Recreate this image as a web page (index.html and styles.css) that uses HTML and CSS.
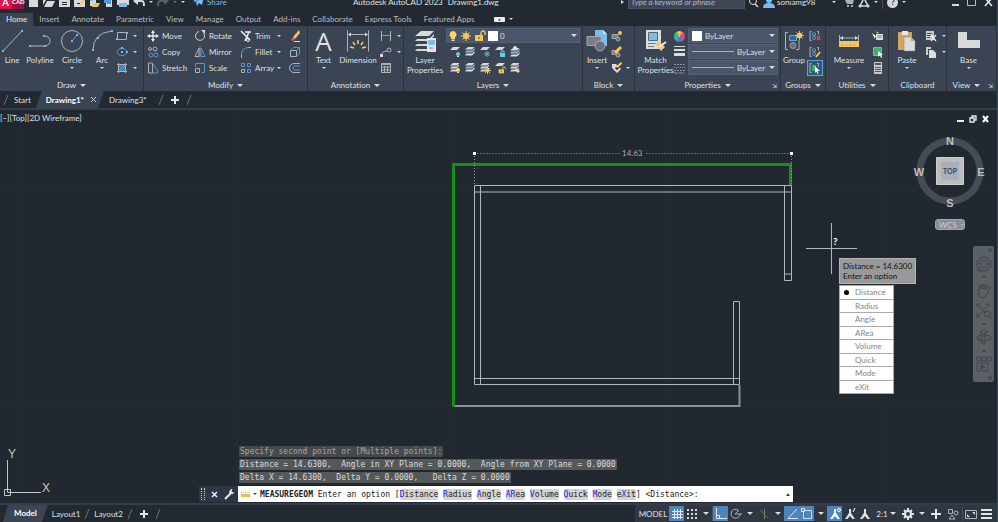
FILE: index.html
```html
<!DOCTYPE html>
<html lang="en">
<head>
  <meta charset="UTF-8">
  <title>Autodesk AutoCAD 2023 - Drawing1.dwg</title>
  <link rel="stylesheet" href="styles.css">
</head>
<body>
  <!-- shared icons -->
  <svg class="defs" aria-hidden="true">
    <symbol id="layer" viewBox="0 0 12 12">
      <path fill="#d9d9d9" d="M4 1h7L8 4H1z"/>
    </symbol>
    <symbol id="layers" viewBox="0 0 12 12">
      <path fill="#d9d9d9" d="M4 1h6.500L8 3.500H1zM2.500 4.500H8L10 2.500v1.500L7.500 6.500H1zM2.500 7.500H8L10 5.500V7L7.500 9.500H1z"/>
    </symbol>
    <symbol id="layers-blue" viewBox="0 0 12 12">
      <path fill="#d9d9d9" d="M4 1h6.500L8 3.500H1z"/>
      <path fill="#77bdf0" d="M2.500 4.500H8L10.500 2v2L8 6.500H1z"/>
      <path fill="#d9d9d9" d="M2.500 7.500H8L10.500 5v2L8 9.500H1z"/>
    </symbol>
    <symbol id="bulb" viewBox="0 0 10 12">
      <path fill="#ffd36b" d="M5 1a3.600 3.600 0 0 1 2 6.500V9H3V7.500A3.600 3.600 0 0 1 5 1z"/>
      <path fill="#ddd" d="M3.500 9.500h3v1.500h-3z"/>
    </symbol>
    <symbol id="sun" viewBox="0 0 12 12">
      <path stroke="#f7c65a" stroke-width="1" d="M6 1v10M1 6h10M2.500 2.500l7 7M9.500 2.500l-7 7"/>
      <circle cx="6" cy="6" r="3" fill="#f7c65a"/>
    </symbol>
    <symbol id="lock" viewBox="0 0 12 12">
      <path fill="#f7c65a" d="M1 5h8v6H1z"/>
      <path fill="none" stroke="#f7c65a" stroke-width="1.300" d="M7 5V3a2 2 0 0 1 4 0v2"/>
      <path fill="#444" d="M4.500 7h1v2h-1z"/>
    </symbol>
    <symbol id="pencil" viewBox="0 0 12 12">
      <path fill="#f7c65a" d="M9 0l2 2-6 6-2-2z"/>
      <path fill="#e8503f" d="M3 6l2 2-2.500 1z"/>
    </symbol>
    <symbol id="scale-man" viewBox="0 0 12 12">
      <path fill="currentColor" d="M5 1h2v4l4 6H8.500L6 8l-2.500 3H1l4-6z"/>
    </symbol>
  </svg>

  <header class="titlebar">
    <div class="quick-access">
      <button class="app-logo">A<small>CAD</small></button>
      <button title="New"><svg width="11" height="12" viewBox="0 0 11 12"><path fill="#d9d9d9" d="M1 0h6l3 3v8H1z"/></svg></button>
      <button title="Open"><svg width="12" height="12" viewBox="0 0 12 12"><path fill="#d9d9d9" d="M0 1h4l1 1h5v2H3L0 9zM4 5h8L9 11H1z"/></svg></button>
      <button title="Save"><svg width="11" height="12" viewBox="0 0 11 12"><path fill="#d9d9d9" d="M0 0h11v11H0z"/><path fill="#222931" d="M2 0h7v4H2zM3 6h5v1H3zM3 8h5v1H3z"/></svg></button>
      <button title="Save As"><svg width="11" height="12" viewBox="0 0 11 12"><path fill="#d9d9d9" d="M0 0h11v11H0z"/><path fill="#222931" d="M2 0h7v4H2zM3 7h3v1H3z"/><path fill="#f7c65a" d="M10 3l1 2-5 5-1-1z"/></svg></button>
      <button title="Open from Web"><svg width="11" height="12" viewBox="0 0 11 12"><path fill="#d9d9d9" d="M1 0h6v10H1z"/><path fill="#f7c65a" d="M4 7h7l-2 4H3z"/><path fill="#77bdf0" d="M1 2h3v3H1z"/></svg></button>
      <button title="Save to Mobile"><svg width="9" height="12" viewBox="0 0 9 12"><path fill="#d9d9d9" d="M2 0h6v11H2z"/><path fill="#4a9bd8" d="M3 1h4v7H3zM0 4h3v3H0z"/></svg></button>
      <button title="Plot"><svg width="12" height="12" viewBox="0 0 12 12"><path fill="#d9d9d9" d="M0 3h12v6H0z"/><path fill="#fff" d="M2 0h8v3H2z"/><path fill="#77bdf0" d="M2 7h8v4H2z"/></svg></button>
      <button title="Undo"><svg width="12" height="12" viewBox="0 0 12 12"><path fill="none" stroke="#d9d9d9" stroke-width="2" d="M3 5h6q2 0 2 5"/><path fill="#d9d9d9" d="M5 1v8L0 5z"/></svg></button>
      <i class="caret"></i>
      <button title="Redo"><svg width="12" height="12" viewBox="0 0 12 12"><path fill="none" stroke="#59606b" stroke-width="2" d="M9 5H3Q1 5 1 10"/><path fill="#59606b" d="M7 1v8l5-4z"/></svg></button>
      <i class="caret dim"></i>
      <i class="caret"></i>
      <button class="share"><svg width="11" height="12" viewBox="0 0 11 12"><path fill="#77bdf0" d="M0 5l11-5-2 9-3-2-2 3-1-4 5-4-6 4z"/></svg>Share</button>
    </div>
    <div class="window-title"><span>Autodesk AutoCAD 2023</span><span>Drawing1.dwg</span></div>
    <div class="infocenter">
      <i class="caret right"></i>
      <input type="text" aria-label="Search" placeholder="Type a keyword or phrase">
      <button title="Search"><svg width="10" height="12" viewBox="0 0 10 12"><circle cx="4" cy="5" r="3.500" fill="none" stroke="#d9d9d9"/><path stroke="#d9d9d9" stroke-width="1.500" d="M6 8l3 3"/></svg></button>
      <button class="user"><svg width="12" height="12" viewBox="0 0 12 12"><circle cx="6" cy="4" r="3" fill="#77bdf0"/><path fill="#77bdf0" d="M0 12q0-5 6-5t6 5z"/></svg>soniamg98</button>
      <i class="caret user-caret"></i>
      <button title="App Store"><svg width="10" height="12" viewBox="0 0 10 12"><path fill="#aeb2b8" d="M0 2h2l1 1h7L9 8H3zM3 9h2v2H3zM7 9h2v2H7z"/></svg></button>
      <button title="Autodesk App"><svg width="12" height="12" viewBox="0 0 12 12"><path fill="none" stroke="#d9d9d9" stroke-width="1.500" d="M6 2l4 8H2z"/><circle cx="2" cy="10" r="1.500" fill="#d9d9d9"/><circle cx="10" cy="10" r="1.500" fill="#d9d9d9"/></svg></button>
      <i class="caret"></i>
      <span class="divider"></span>
      <button class="help" title="Help">?</button>
      <i class="caret"></i>
      <div class="window-buttons">
        <button title="Minimize"><svg width="9" height="10" viewBox="0 0 9 10"><path fill="#d9d9d9" d="M2 7h7v2H2z"/></svg></button>
        <button title="Maximize"><svg width="9" height="10" viewBox="0 0 9 10"><path fill="none" stroke="#b9bdc2" d="M.5.500h8v8h-8z"/></svg></button>
        <button title="Close"><svg width="9" height="10" viewBox="0 0 9 10"><path stroke="#eee" stroke-width="1.500" d="M1 1l7 8M8 1L1 9"/></svg></button>
      </div>
    </div>
  </header>

  <nav class="ribbon-tabs">
    <a href="#" class="active">Home</a>
    <a href="#">Insert</a>
    <a href="#">Annotate</a>
    <a href="#">Parametric</a>
    <a href="#">View</a>
    <a href="#">Manage</a>
    <a href="#">Output</a>
    <a href="#">Add-ins</a>
    <a href="#">Collaborate</a>
    <a href="#">Express Tools</a>
    <a href="#">Featured Apps</a>
    <button class="ribbon-toggle" title="Minimize ribbon"><svg width="11" height="5" viewBox="0 0 11 5"><rect width="11" height="5" rx="1" fill="#eee"/><path fill="#444" d="M4 3.500h3L5.500 1.500z"/></svg><i class="caret"></i></button>
  </nav>

  <main class="ribbon">
    <section class="panel draw">
      <div class="tools">
        <button class="big"><svg width="22" height="22" viewBox="0 0 22 22"><path class="ln" d="M2 21L21 1"/><path class="pt" d="M1 20h2v2H1zM20 0h2v2h-2z"/></svg>Line</button>
        <button class="big"><svg width="22" height="22" viewBox="0 0 22 22"><path class="ln" d="M1 16h15a5 5 0 0 0 0-10h-1"/><path class="pt" d="M0 15h2v2H0zM15 15h2v2h-2zM14 5h2v2h-2z"/></svg>Polyline</button>
        <button class="big"><svg width="22" height="22" viewBox="0 0 22 22"><circle class="ln" cx="11" cy="11" r="10.500"/><path stroke="#56a9e8" d="M11 11l5-6"/><path class="pt" d="M10 10h2v2h-2zM15 4h2v2h-2z"/></svg>Circle<i class="caret"></i></button>
        <button class="big"><svg width="22" height="22" viewBox="0 0 22 22"><path class="ln" d="M2 20Q2 3 21 1"/><path class="pt" d="M1 19h2v2H1zM6 7h2v2H6zM20 0h2v2h-2z"/></svg>Arc<i class="caret"></i></button>
        <div class="small-col">
          <button><svg width="12" height="12" viewBox="0 0 12 12"><path class="ln" d="M1.500 2.500h9v7h-9z"/><path class="pt" d="M0 8h2v2H0zM10 2h2v2h-2z"/></svg><i class="caret"></i></button>
          <button><svg width="12" height="12" viewBox="0 0 12 12"><ellipse class="bl" cx="6" cy="6" rx="5" ry="3.500"/><path class="pt" d="M5 5h2v2H5zM10 5h2v2h-2zM5 1h2v2H5z"/></svg><i class="caret"></i></button>
          <button><svg width="12" height="12" viewBox="0 0 12 12"><path fill="#3d6f9d" d="M3 3h6v6H3z"/><path stroke="#56a9e8" stroke-width="1" d="M3 5l2-2M3 8l5-5M4 9l5-5M7 9l2-2"/><path class="ln" d="M1 2.500h10M1 9.500h10M2.500 1v10M9.500 1v10"/></svg><i class="caret"></i></button>
        </div>
      </div>
      <h2>Draw<i class="caret"></i></h2>
    </section>

    <section class="panel modify">
      <div class="tools">
        <div class="small-col">
          <button><svg width="12" height="12" viewBox="0 0 12 12"><path stroke="#eee" stroke-width="1.300" d="M6 2v8M2 6h8"/><path fill="#eee" d="M6 0l2 3H4zM6 12l2-3H4zM0 6l3-2v4zM12 6L9 4v4z"/></svg>Move</button>
          <button><svg width="12" height="12" viewBox="0 0 12 12"><circle class="ln" cx="3" cy="3" r="1.500"/><circle class="ln" cx="8" cy="3" r="2"/><circle class="bl" cx="4" cy="9" r="2"/><circle class="bl" cx="9" cy="9" r="2"/></svg>Copy</button>
          <button><svg width="12" height="12" viewBox="0 0 12 12"><path class="ln" d="M1.500 1v10h4V1z"/><path class="bl" d="M5.500 1.500l5 7v2.500h-5"/></svg>Stretch</button>
        </div>
        <div class="small-col">
          <button><svg width="12" height="12" viewBox="0 0 12 12"><path fill="none" stroke="#d9d9d9" d="M9.500 3A4.500 4.500 0 1 1 5 1.500"/><path fill="#d9d9d9" d="M7 0h4v4z"/></svg>Rotate</button>
          <button><svg width="12" height="12" viewBox="0 0 12 12"><path class="ln" d="M5 2v8.500H1z"/><path class="bl" d="M7 2v8.500h4z"/><path stroke="#aaa" d="M6 0v12" stroke-width=".5"/></svg>Mirror</button>
          <button><svg width="12" height="12" viewBox="0 0 12 12"><path class="bl" d="M1.500 5V1.500h9v9H8"/><path class="ln" d="M1.500 6.500h4v4h-4z"/></svg>Scale</button>
        </div>
        <div class="small-col">
          <button><svg width="12" height="12" viewBox="0 0 12 12"><path stroke="#eee" stroke-width="1.500" fill="none" d="M1 1l9 9M9 2l-4 9M5 2h6"/><circle cx="8" cy="10" r="1.500" fill="none" stroke="#eee"/></svg>Trim<i class="caret"></i></button>
          <button><svg width="12" height="12" viewBox="0 0 12 12"><path class="bl" d="M1.500 11V8Q2 1.500 9 1.500"/><path class="ln" d="M8 1.500h3M1.500 9v3"/></svg>Fillet<i class="caret"></i></button>
          <button><svg width="12" height="12" viewBox="0 0 12 12"><path class="bl" d="M1.500 1.500h3v3h-3zM7.500 1.500h3v3h-3zM7.500 7.500h3v3h-3z"/><path class="ln" d="M1.500 7.500h3v3h-3z"/></svg>Array<i class="caret"></i></button>
        </div>
        <div class="small-col">
          <button title="Erase"><svg width="12" height="12" viewBox="0 0 12 12"><path fill="#f7c65a" d="M10 0l1 3-5 6-2-2z"/><path fill="#e8604f" d="M4 7l2 2-2 2-2-1z"/><path stroke="#ddd" d="M5 11.500h6"/></svg></button>
          <button title="Explode"><svg width="12" height="12" viewBox="0 0 12 12"><path class="ln" d="M1.500 4.500h6v6h-6z"/><path class="bl" d="M2.500 3.500l2-2h6v6l-2 2M8 4l2.500-2.500"/></svg></button>
          <button title="Offset"><svg width="12" height="12" viewBox="0 0 12 12"><path class="ln" d="M11 1.500H5a4.500 4.500 0 0 0 0 9h6"/><path class="bl" d="M11 4H6a2 2 0 0 0 0 4h5"/></svg></button>
        </div>
      </div>
      <h2>Modify<i class="caret"></i></h2>
    </section>

    <section class="panel annotation">
      <div class="tools">
        <button class="big"><span class="letter">A</span>Text<i class="caret"></i></button>
        <button class="big"><svg width="22" height="22" viewBox="0 0 22 22"><path class="ln" d="M.5.500v21M21.500.500v21M2 4.500h18"/><path fill="#d9d9d9" d="M1 4.500l3-2v4zM21 4.500l-3-2v4z"/><path stroke="#f7c65a" stroke-width="1.500" d="M11 10v4M6 12l2 3M16 12l-2 3M3 17l4 1M19 17l-4 1"/></svg>Dimension</button>
        <div class="small-col">
          <button><svg width="12" height="12" viewBox="0 0 12 12"><path class="ln" d="M1.500 1v10M10.500 1v10"/><path stroke="#56a9e8" d="M2 5.500h8"/></svg><i class="caret"></i></button>
          <button><svg width="12" height="12" viewBox="0 0 12 12"><path class="ln" d="M1 10q1-5 6-5"/><circle class="ln" cx="9" cy="4" r="2"/><path fill="#d9d9d9" d="M0 8h3v3H0z"/></svg><i class="caret"></i></button>
          <button><svg width="12" height="12" viewBox="0 0 12 12"><path class="ln" d="M1.500 1.500h9v9h-9zM1.500 5h9M1.500 8h9M4.500 4v7M7.500 4v7"/><path fill="#aaa" d="M1 1h10v2H1z"/></svg></button>
        </div>
      </div>
      <h2>Annotation<i class="caret"></i></h2>
    </section>

    <section class="panel layers">
      <div class="tools">
        <button class="big two-line"><svg width="24" height="22" viewBox="0 0 24 22"><path fill="#d9d9d9" d="M8 1h13l-5 5H2zM4 9h12l5-5v2l-5 5H2zM4 14h10v2H2zM4 19h10v2H2z"/><path fill="#e4e4e4" d="M14 8h9v14h-9z"/><path fill="#77bdf0" d="M15 10h7v5h-7z"/><path stroke="#888" d="M16 18h4"/></svg>Layer<br>Properties</button>
        <div class="layer-tools">
          <div class="combo">
            <svg width="10" height="12"><use href="#bulb"/></svg>
            <svg width="12" height="12"><use href="#sun"/></svg>
            <svg width="12" height="12"><use href="#lock"/></svg>
            <span class="swatch"></span>
            <select aria-label="Layer"><option>0</option></select>
            <i class="caret"></i>
          </div>
          <div class="icon-row">
            <button><svg width="12" height="12"><use href="#layer"/><circle cx="9" cy="8" r="2" fill="#5fd4e0"/><path fill="#ddd" d="M8 10h2v1H8z"/></svg></button>
            <button><svg width="12" height="12"><use href="#layers-blue"/></svg></button>
            <button><svg width="12" height="12"><use href="#layer"/><path stroke="#4fb5bd" d="M8 5v6M5 8h6M6 6l4 4M10 6l-4 4"/></svg></button>
            <button><svg width="12" height="12"><use href="#layer"/><path fill="#5fd4e0" d="M6 7h5v4H6z"/><path class="ln cyan" d="M7 7V5h3v2"/></svg></button>
            <button><svg width="12" height="12"><use href="#layers-blue" y="1"/><circle cx="6" cy="2" r="2" fill="#ddd"/></svg></button>
          </div>
          <div class="icon-row">
            <button><svg width="12" height="12"><use href="#layers"/><circle cx="9" cy="8" r="2" fill="#ffd36b"/><path fill="#ddd" d="M8 10h2v1H8z"/></svg></button>
            <button><svg width="12" height="12"><use href="#layers-blue"/></svg></button>
            <button><svg width="12" height="12"><use href="#layers"/><path stroke="#f7c65a" d="M8.500 5v7M5 8.500h7M6 6l5 5M11 6l-5 5"/></svg></button>
            <button><svg width="12" height="12"><use href="#layer"/><use href="#lock" x="4" y="4" width="8" height="8"/></svg></button>
            <button><svg width="12" height="12"><use href="#layers"/><path fill="#f0d9a8" d="M7 6l4 3-2 2-3-3z"/></svg></button>
          </div>
        </div>
      </div>
      <h2>Layers<i class="caret"></i></h2>
    </section>

    <section class="panel block">
      <div class="tools">
        <button class="big"><svg width="22" height="22" viewBox="0 0 22 22"><path fill="#77bdf0" d="M9 0h8l4 4v12H9z"/><path fill="#c9e5fa" d="M17 0l4 4h-4z"/><path fill="#7b8087" stroke="#a5a8ad" d="M1 6.500h14v9H1z"/><circle cx="14" cy="16" r="5" fill="#6b7078" stroke="#a5a8ad"/></svg>Insert<i class="caret"></i></button>
        <div class="small-col">
          <button><svg width="12" height="12" viewBox="0 0 12 12"><path fill="#7b8087" stroke="#a5a8ad" d="M1 4.500h6v4H1z"/><circle cx="7" cy="9" r="2" fill="#6b7078" stroke="#a5a8ad"/><circle cx="9" cy="3" r="2" fill="#f7c65a"/></svg></button>
          <button><svg width="12" height="12" viewBox="0 0 12 12"><path fill="#7b8087" stroke="#a5a8ad" d="M1 4.500h6v4H1z"/><circle cx="7" cy="9" r="2" fill="#6b7078" stroke="#a5a8ad"/><use href="#pencil"/></svg></button>
          <button><svg width="12" height="12" viewBox="0 0 12 12"><path fill="#ddd" d="M1 2h4l5 5-4 4-5-5z"/><path stroke="#555" d="M4 6l2 2 5-6"/><use href="#pencil" x="3" width="9" height="9"/></svg><i class="caret"></i></button>
        </div>
      </div>
      <h2>Block<i class="caret"></i></h2>
    </section>

    <section class="panel properties">
      <div class="tools">
        <button class="big two-line"><svg width="22" height="22" viewBox="0 0 22 22"><path fill="#dcdcdc" d="M1 0h15v19H1z"/><path fill="#77bdf0" stroke="#5b6572" d="M3.500 2.500h9v8h-9z"/><path stroke="#777" d="M3 13.500h9M3 16.500h6"/><path fill="#f3cd75" d="M10 14l4-3 6 6-4 4z"/><path stroke="#eee" stroke-width="2" d="M14 17l7-5"/></svg>Match<br>Properties</button>
        <div class="small-col prop-icons">
          <button title="Color"><span class="wheel"></span></button>
          <button title="Lineweight"><svg width="12" height="12" viewBox="0 0 12 12"><path fill="#ddd" d="M0 0h11v1H0zM0 3h11v2H0zM0 7h11v3H0z"/></svg></button>
          <button title="Linetype"><svg width="12" height="12" viewBox="0 0 12 12"><path stroke="#8d949e" stroke-dasharray="2 1" d="M0 2.500h11M0 8.500h11"/><path stroke="#8d949e" stroke-dasharray="1 1" d="M0 5.500h11"/><path stroke="#8d949e" stroke-dasharray="4 1" d="M0 11h11"/></svg></button>
        </div>
        <div class="combos">
          <div class="combo"><span class="swatch"></span><select aria-label="Color"><option>ByLayer</option></select><i class="caret"></i></div>
          <div class="combo"><span class="line"></span><select aria-label="Lineweight"><option>ByLayer</option></select><i class="caret"></i></div>
          <div class="combo"><span class="line"></span><select aria-label="Linetype"><option>ByLayer</option></select><i class="caret"></i></div>
        </div>
      </div>
      <h2>Properties<i class="caret"></i><span class="launcher">⇲</span></h2>
    </section>

    <section class="panel groups">
      <div class="tools">
        <button class="big"><svg width="22" height="22" viewBox="0 0 22 22"><path class="ln" d="M5 2.500H2.500v17H5M13 19.500h3V10"/><path fill="#356a98" stroke="#56a9e8" d="M6.500 5.500h7v5h-7z"/><circle cx="10" cy="15.500" r="3" fill="#6b7078" stroke="#999"/><use href="#sun" x="11" y="0" width="11" height="11"/></svg>Group</button>
        <div class="small-col">
          <button><svg width="12" height="12" viewBox="0 0 12 12"><path class="ln" d="M2.500 1.500H1v9h1.500M8 1.500h1.500v3"/><path class="bl" d="M3.500 3h3v2.500h-3z"/><circle class="bl" cx="5" cy="8" r="1.500"/><path stroke="#e8503f" stroke-width="1.300" d="M8 6l3 4M11 6l-3 4"/></svg></button>
          <button><svg width="12" height="12" viewBox="0 0 12 12"><path class="ln" d="M2.500 1.500H1v9h1.500M8 1.500h1.500v3"/><path class="bl" d="M3.500 3h3v2.500h-3z"/><circle class="bl" cx="5" cy="8" r="1.500"/><path stroke="#f7c65a" stroke-width="2" d="M11 6l-4 5"/></svg></button>
          <button class="on"><svg width="12" height="12" viewBox="0 0 12 12"><path class="ln" d="M2.500 1.500H1v9h1.500M8 1.500h1.500v3"/><path fill="#3fae6a" d="M3 3h4v6H3z"/><path fill="#fff" d="M6 4l5 5H8.500l1 2.500-1 .5-1-2.500L6 11z"/></svg></button>
        </div>
      </div>
      <h2>Groups<i class="caret"></i></h2>
    </section>

    <section class="panel utilities">
      <div class="tools">
        <button class="big"><svg width="20" height="22" viewBox="0 0 20 22"><path class="ln" d="M.5 5v6M19.500 5v6M1 8h18"/><path fill="#d9d9d9" d="M1 8l3-2v4zM19 8l-3-2v4z"/><path fill="#f7c65a" d="M0 11h20v6H0z"/><path stroke="#c99c42" d="M3.500 14v2M7.500 14v2M11.500 14v2M15.500 14v2"/></svg>Measure<i class="caret"></i></button>
        <div class="small-col">
          <button><svg width="12" height="12" viewBox="0 0 12 12"><path fill="#ddd" d="M4 4h7v6H4z"/><path fill="#77bdf0" d="M5 5h5v3H5z"/><path fill="#f7c65a" d="M4 0l1 2h2L5 4z"/><path fill="#fff" d="M0 3l5 4H3v2z"/></svg></button>
          <button><svg width="12" height="12" viewBox="0 0 12 12"><path fill="#3fae6a" stroke="#67c98c" d="M1.500 1.500h8v8h-8z"/><path fill="#fff" d="M6 5l5 4H9l1 2.500-1 .5-1-2.500-2 1z"/></svg></button>
          <button><svg width="12" height="12" viewBox="0 0 12 12"><path fill="#c9c9c9" d="M2 0h8v12H2z"/><path fill="#4d5562" d="M3 1h6v2H3zM3 5h6v1H3zM3 7h6v1H3zM3 9h6v1H3z"/></svg></button>
        </div>
      </div>
      <h2>Utilities<i class="caret"></i></h2>
    </section>

    <section class="panel clipboard">
      <div class="tools">
        <button class="big"><svg width="20" height="22" viewBox="0 0 20 22"><path fill="#d6a561" d="M1 2h14v18H1z"/><path fill="#e9e9e9" d="M5 1h6v4H5z"/><path fill="#dcdcdc" stroke="#7d8086" stroke-width=".5" d="M7 7h7l4 4v10H7z"/><path fill="#aaa" d="M14 7l4 4h-4z"/></svg>Paste<i class="caret"></i></button>
        <div class="small-col">
          <button><svg width="12" height="12" viewBox="0 0 12 12"><path fill="#c9c9c9" d="M1 1h8v9H1z"/><path stroke="#555" d="M2 3.500h5M2 5.500h4M2 7.500h3"/><path stroke="#eee" stroke-width="1.200" d="M6 5l5 6M11 5l-5 6"/></svg><i class="caret"></i></button>
          <button><svg width="12" height="12" viewBox="0 0 12 12"><path fill="#c9c9c9" d="M1 1h5v2H3v6H1z"/><path fill="#dcdcdc" d="M4 4h4l3 3v5H4z"/></svg><i class="caret"></i></button>
        </div>
      </div>
      <h2>Clipboard</h2>
    </section>

    <section class="panel view">
      <div class="tools">
        <button class="big"><svg width="22" height="22" viewBox="0 0 22 22"><path fill="#d9d9d9" d="M0 2h9v8h13v8H0z"/></svg>Base<i class="caret"></i></button>
      </div>
      <h2>View<i class="caret"></i><span class="launcher">⇲</span></h2>
    </section>
  </main>

  <nav class="file-tabs">
    <svg class="slash" viewBox="0 0 6 10"><path d="M5 0L1 10"/></svg>
    <a href="#">Start</a>
    <a href="#" class="active">Drawing1*<svg width="7" height="7" viewBox="0 0 7 7"><path stroke="#c9ccd1" d="M1 1l5 5M6 1L1 6"/></svg></a>
    <a href="#">Drawing3*</a>
    <svg class="slash gap" viewBox="0 0 6 10"><path d="M5 0L1 10"/></svg>
    <button class="add" title="New drawing"><svg width="8" height="8" viewBox="0 0 8 8"><path fill="#e6e6e6" d="M3 0h2v3h3v2H5v3H3V5H0V3h3z"/></svg></button>
    <svg class="slash" viewBox="0 0 6 10"><path d="M5 0L1 10"/></svg>
  </nav>

  <div class="canvas">
    <div class="viewport-label">[−][Top][2D Wireframe]</div>

    <div class="viewport-buttons">
      <button title="Minimize"><svg width="8" height="8" viewBox="0 0 8 8"><path fill="#eee" d="M1 5h7v2H1z"/></svg></button>
      <button title="Restore"><svg width="8" height="8" viewBox="0 0 8 8"><path fill="none" stroke="#eee" stroke-width="1.300" d="M1 3h4v4H1zM3 3V1h4v4H5"/></svg></button>
      <button title="Close"><svg width="8" height="8" viewBox="0 0 8 8"><path stroke="#fff" stroke-width="2" d="M1 1l5 6M6 1L1 7"/></svg></button>
    </div>

    <!-- floor plan -->
    <svg class="plan" width="360" height="265" viewBox="440 145 360 265">
      <g fill="none" stroke="#b4b7ba">
        <path d="M474.500 185.500h317v95h-7v-95M474.500 192h317M474.500 185.500v199h265v-83h-6v83M480.500 185.500v199M474.500 378.500h265M784.500 274h7"/>
        <path stroke="#8e9194" stroke-width="2" d="M453 406h286.500v-21"/>
        <path stroke="#158f19" stroke-width="3" d="M453.500 407V164.500h337V185"/>
        <path stroke="#9a9da1" stroke-dasharray="1 2" d="M474.500 153.500h146M646.500 153.500h145M474.500 156v29M791.500 156v29"/>
      </g>
      <path fill="#fff" d="M473 152h3v3h-3zM790 152h3v3h-3z"/>
      <text x="622" y="156">14.63</text>
    </svg>

    <svg class="crosshair" width="52" height="52" viewBox="0 0 52 52">
      <path stroke="#b5b8bb" d="M25.500 0v51M0 25.500h51"/>
      <text x="27" y="22">?</text>
    </svg>

    <div class="dynamic-prompt">Distance = 14.6300<br>Enter an option</div>
    <div class="dynamic-menu">
      <button class="selected">Distance</button>
      <button>Radius</button>
      <button>Angle</button>
      <button>ARea</button>
      <button>Volume</button>
      <button>Quick</button>
      <button>Mode</button>
      <button>eXit</button>
    </div>

    <div class="viewcube">
      <svg width="76" height="80" viewBox="0 0 76 80">
        <circle cx="38" cy="40" r="30" fill="none" stroke="#464c55" stroke-width="7"/>
        <path fill="#bdbdbe" stroke="#d0d0d0" d="M24.500 26.500h27v27h-27z"/>
        <path fill="#a9afbb" d="M29 31h18v18H29z"/>
        <g class="compass">
          <text x="38" y="14">N</text>
          <text x="69" y="45">E</text>
          <text x="38" y="76">S</text>
          <text x="7" y="45">W</text>
        </g>
        <text class="face" x="38" y="43">TOP</text>
      </svg>
      <button class="wcs">WCS<i class="caret"></i></button>
    </div>

    <div class="navbar">
      <span class="dot"></span>
      <button title="Steering Wheel"><svg width="16" height="16" viewBox="0 0 16 16"><circle cx="8" cy="8" r="7"/><circle cx="8" cy="8" r="4"/><path d="M2 12v3h5"/></svg></button>
      <i class="caret"></i>
      <button title="Pan"><svg width="16" height="16" viewBox="0 0 16 16"><path d="M4 10L1 7q1-2 3 0L3 3q1-2 2 0l1 3V2q1-2 2 0v4l1-4q1-1 2 0l-1 5 2-3q2-1 2 1l-3 6q-1 4-5 4-3-1-4-4z"/></svg></button>
      <button title="Zoom Extents"><svg width="16" height="16" viewBox="0 0 16 16"><path d="M1 1l9 9M1 14L13 1M1 4V1h3M10 1h3v3M1 11v3h3"/><circle cx="11" cy="11" r="3"/><path d="M13 13l3 3"/></svg></button>
      <i class="caret"></i>
      <button title="Orbit"><svg width="16" height="16" viewBox="0 0 16 16"><ellipse cx="8" cy="9" rx="7" ry="3"/><path d="M6 15V3H4l4-3 4 3H9v12zM3 13l2-2-2-2"/></svg></button>
      <i class="caret"></i>
      <button title="ShowMotion"><svg width="16" height="16" viewBox="0 0 16 16"><path d="M1 1h4v4H1zM6 1h4v4H6zM11 1h4v4h-4zM1 7h11v8H1z"/><path fill="#3c4249" d="M5 9l4 2-4 2z"/></svg></button>
      <span class="dot"></span>
    </div>

    <svg class="ucs" width="54" height="50" viewBox="0 0 54 50">
      <path fill="none" stroke="#c3c5c7" d="M7.500 12v32M7.500 44.500H41M4.500 41.500h6v6h-6z"/>
      <text x="8" y="10">Y</text>
      <text x="42" y="44">X</text>
    </svg>

    <div class="command">
      <div class="history">
        <p class="old">Specify second point or [Multiple points]:</p>
        <p>Distance = 14.6300,  Angle in XY Plane = 0.0000,  Angle from XY Plane = 0.0000</p>
        <p>Delta X = 14.6300,  Delta Y = 0.0000,   Delta Z = 0.0000</p>
      </div>
      <div class="command-bar">
        <span class="grip"></span>
        <button title="Close"><svg width="7" height="7" viewBox="0 0 7 7"><path stroke="#eee" stroke-width="1.500" d="M1 1l5 5M6 1L1 6"/></svg></button>
        <button title="Customize"><svg width="11" height="11" viewBox="0 0 11 11"><path stroke="#e6e6e6" stroke-width="2" d="M1 10l6-6"/><path fill="#e6e6e6" d="M10.500 3L9 5 6 5 5 3l2-3 1.500 0L7.500 2l1.500 1.500z"/></svg></button>
        <div class="prompt">
          <svg width="9" height="6" viewBox="0 0 9 6"><path stroke="#bbb" stroke-dasharray="1 1" d="M0 1.500h9"/><path fill="#f0b840" d="M0 3h9v3H0z"/></svg>
          <i class="caret"></i>
          <label for="cmd"><b>MEASUREGEOM</b> Enter an option [<button><u>D</u>istance</button> <button><u>R</u>adius</button> <button><u>A</u>ngle</button> <button><u>AR</u>ea</button> <button><u>V</u>olume</button> <button><u>Q</u>uick</button> <button><u>M</u>ode</button> <button>e<u>X</u>it</button>] &lt;Distance&gt;:</label>
          <input type="text" id="cmd">
          <i class="caret up"></i>
        </div>
      </div>
    </div>
  </div>

  <footer class="statusbar">
    <nav class="layout-tabs">
      <a href="#" class="active">Model</a>
      <a href="#">Layout1</a>
      <svg class="slash" viewBox="0 0 6 10"><path d="M5 0L1 10"/></svg>
      <a href="#">Layout2</a>
      <svg class="slash" viewBox="0 0 6 10"><path d="M5 0L1 10"/></svg>
      <button class="add" title="New layout"><svg width="8" height="8" viewBox="0 0 8 8"><path fill="#e6e6e6" d="M3 0h2v3h3v2H5v3H3V5H0V3h3z"/></svg></button>
      <svg class="slash" viewBox="0 0 6 10"><path d="M5 0L1 10"/></svg>
    </nav>
    <div class="status-tools">
      <button class="text">MODEL</button>
      <button class="on"><svg width="12" height="12" viewBox="0 0 12 12"><path stroke="#e6e6e6" d="M3.500 1v10M6.500 1v10M9.500 1v10M1 3.500h11M1 6.500h11M1 9.500h11"/></svg></button>
      <button><svg width="12" height="12" viewBox="0 0 12 12"><path stroke="#d9d9d9" stroke-width="2" stroke-dasharray="2 2" d="M1 2h10M1 6h10M1 10h10"/></svg></button>
      <button class="drop"><i class="caret"></i></button>
      <span class="divider"></span>
      <button class="on"><svg width="12" height="12" viewBox="0 0 12 12"><path fill="none" stroke="#e6e6e6" d="M1.500 0v10.500H12M1.500 7.500h3v3"/></svg></button>
      <button><svg width="12" height="12" viewBox="0 0 12 12"><path class="ln" d="M8 2a4.500 4.500 0 1 0 2 4M5 6h7M5 6l4-4"/></svg></button>
      <button class="drop"><i class="caret"></i></button>
      <button><svg width="12" height="12" viewBox="0 0 12 12"><path stroke="#a34a4a" d="M2 2l8 8"/><path stroke="#4f9a68" d="M6.500 1v10"/></svg></button>
      <button class="drop"><i class="caret"></i></button>
      <button class="on"><svg width="12" height="12" viewBox="0 0 12 12"><path fill="none" stroke="#e6e6e6" d="M11 1L2 10.500h10"/></svg></button>
      <button class="on"><svg width="12" height="12" viewBox="0 0 12 12"><path fill="none" stroke="#d0dbe6" d="M2.500 2.500h8v8h-8z"/><path fill="#5b8fc7" stroke="#e6e6e6" d="M.5.500h3v3h-3z"/></svg></button>
      <button class="drop"><i class="caret"></i></button>
      <button class="on"><svg width="12" height="12" viewBox="0 0 12 12"><use href="#scale-man"/><circle cx="10" cy="2" r="1.500" fill="none" stroke="#fff"/></svg></button>
      <button><svg width="12" height="12" viewBox="0 0 12 12"><use href="#scale-man"/><path stroke="#fff" d="M9 4l2-4"/></svg></button>
      <button><svg width="12" height="12" viewBox="0 0 12 12"><use href="#scale-man"/></svg></button>
      <button class="text scale">2:1<i class="caret"></i></button>
      <button><svg width="12" height="12" viewBox="0 0 12 12"><circle cx="6" cy="6" r="3" fill="none" stroke="#e6e6e6" stroke-width="2"/><path stroke="#e6e6e6" stroke-width="2" d="M6 0v3M6 9v3M0 6h3M9 6h3M2 2l2 2M8 8l2 2M10 2L8 4M4 8l-2 2"/></svg></button>
      <button class="drop"><i class="caret"></i></button>
      <button><svg width="12" height="12" viewBox="0 0 12 12"><path fill="#e6e6e6" d="M5 1h2v4h4v2H7v4H5V7H1V5h4z"/></svg></button>
      <button class="isolate"><svg width="12" height="12" viewBox="0 0 12 12"><path class="ln" d="M1.500 1.500h4v4h-4zM2 11l3-4 3 4z"/><circle class="ln" cx="9" cy="5" r="2"/></svg></button>
      <span class="divider"></span>
      <button><svg width="12" height="12" viewBox="0 0 12 12"><path class="ln" d="M.5 2.500h11v8H.5z"/><path fill="#d9d9d9" d="M7 4h3v3zM2 6v3h3z"/></svg></button>
      <button><svg width="12" height="12" viewBox="0 0 12 12"><path fill="#e6e6e6" d="M1 1h11v2H1zM1 5h11v2H1zM1 9h11v2H1z"/></svg></button>
    </div>
  </footer>
</body>
</html>
```

FILE: styles.css
```css
* { box-sizing: border-box; }
body { margin: 0; height: 100vh; display: flex; flex-direction: column; overflow: hidden; background: #222931; color: #dfe1e4; font: 8px/10px Lato, "Open Sans", sans-serif; border-right: 1px solid #1f5578; }
button { display: flex; align-items: center; margin: 0; padding: 0; border: 0; background: none; color: inherit; font: inherit; white-space: nowrap; }
a { color: inherit; text-decoration: none; }
svg { display: block; flex: none; }
.defs { position: absolute; width: 0; height: 0; }
.ln { fill: none; stroke: #aeb3ba; }
.bl { fill: none; stroke: #5597cf; }
.pt { fill: #6bb8f2; }
.cyan { stroke: #5fd4e0; }
.caret { flex: none; width: 0; height: 0; border: 2px solid transparent; border-top-color: #d9dbde; border-bottom: 0; }
.caret.dim { border-top-color: #6b727d; }
.caret.right { border: 2px solid transparent; border-left: 3px solid #d9dbde; border-right: 0; }
.divider { flex: none; width: 1px; height: 14px; background: #454e5c; }
.slash { width: 6px; height: 10px; stroke: #69717d; }

/* title bar, pushed partly above the top edge */
.titlebar { flex: none; display: grid; grid-template-columns: 353fr 268fr 376fr; height: 20px; margin-top: -8px; align-items: center; }
.quick-access, .window-title, .infocenter { display: flex; align-items: center; }
.quick-access { gap: 4px; }
.app-logo { width: 24px; height: 14px; padding-left: 2px; background: linear-gradient(90deg, #e51050 50%, #a30d3c 50%); color: #fff; font-size: 10px; font-weight: bold; }
.app-logo small { margin-left: 3px; font-size: 6px; }
.share { gap: 3px; margin-left: 4px; color: #77bdf0; font-size: 8px; }
.window-title { gap: 5px; }
.infocenter { gap: 4px; }
.infocenter input { width: 117px; height: 14px; padding: 0 2px; border: 1px solid #4a5364; background: #3e4656; color: #ccc; font: italic 8px Lato, sans-serif; }
.infocenter input::placeholder { color: #b5bac2; }
.user { gap: 2px; }
.user-caret { margin: 0 4px 0 13px; }
.help { width: 11px; height: 11px; justify-content: center; border-radius: 50%; background: #d9d9d9; color: #222931; font-weight: bold; }
.window-buttons { display: flex; gap: 8px; margin: 0 4px 0 auto; }

.ribbon-tabs { flex: none; display: flex; height: 14px; color: #b9bdc4; }
.ribbon-tabs a { padding: 2px 6px; }
.ribbon-tabs a.active { margin-top: 1px; padding: 1px 6px; background: #3b4453; color: #e6e8ea; }
.ribbon-toggle { margin-left: 14px; gap: 4px; }

.ribbon { flex: none; display: grid; grid-template-columns: 144fr 164fr 96fr 179fr 52fr 146fr 45fr 63fr 58fr 50fr; height: 65px; }
.panel { display: flex; flex-direction: column; min-width: 0; background: #3b4453; border-right: 1px solid #2b323e; }
.panel h2 { display: flex; justify-content: center; align-items: center; gap: 4px; position: relative; height: 12px; margin: 0; font: inherit; }
.panel h2 .caret, .combo .caret { border-width: 3px 3px 0; }
.tools { display: flex; height: 53px; padding-top: 2px; }
.big { flex-direction: column; padding-top: 2px; line-height: 10px; }
.big svg, .letter { margin-bottom: 3px; }
.big .caret { margin-top: 2px; }
.big.two-line { text-align: center; }
.letter { height: 22px; font: 26px/22px "Open Sans", sans-serif; }
.small-col { display: grid; grid-template-rows: repeat(3, 16px); }
.small-col button { gap: 3px; }
.small-col .caret { margin-left: 2px; }
.small-col .on { width: 16px; margin-left: -2px; justify-content: center; border: 1px solid #5ba3dc; background: #2f5878; }
.launcher { position: absolute; right: 3px; font: 6px "DejaVu Sans", sans-serif; }

.draw .big { width: 32px; }
.draw .big:first-child { width: 24px; }
.draw .big:nth-child(4) { width: 28px; }
.draw .small-col { margin-left: auto; margin-right: 6px; }
.modify .tools { padding-left: 3px; }
.modify .small-col:nth-child(1) { width: 47px; }
.modify .small-col:nth-child(2) { width: 46px; }
.modify .small-col:nth-child(3) { width: 49px; }
.modify .small-col .caret { margin: 0 9px 0 auto; }
.annotation .big:nth-child(1) { width: 31px; }
.annotation .big:nth-child(2) { width: 38px; }
.annotation .small-col { margin-left: 3px; }
.layers .big { width: 42px; }
.layer-tools { flex: 1; display: grid; grid-template-rows: repeat(3, 16px); margin-right: 2px; }
.icon-row { display: flex; gap: 3px; padding-left: 3px; }
.combo { display: flex; align-items: center; gap: 3px; height: 15px; padding: 0 2px 0 3px; background: #4b566b; border: 1px solid #555f73; }
.layers .combo { padding-left: 1px; gap: 2px; }
.combo select { flex: 1; min-width: 0; padding: 0; border: 0; appearance: none; background: none; color: #dfe1e4; font: inherit; }
.swatch { width: 10px; height: 10px; background: #fff; }
.line { width: 42px; height: 1px; background: #aab0ba; }
.block .big { width: 28px; }
.block .small-col button { gap: 1px; }
.properties .tools { padding-left: 2px; }
.properties .big { width: 42px; }
.prop-icons { width: 13px; }
.wheel { width: 11px; height: 11px; border-radius: 50%; background: conic-gradient(#f7c65a, #e8503f, #c04fc0, #4a6fe0, #2fb4c9, #43b35a, #f7c65a); }
.combos { flex: 1; display: grid; grid-template-rows: repeat(3, 16px); margin: 0 2px; }
.groups .big { width: 26px; }
.groups .small-col { margin-left: 2px; }
.utilities .big { width: 46px; }
.clipboard .big { width: 36px; }
.view .big { width: 43px; }
.view h2 { padding-right: 10px; }

.file-tabs { flex: none; display: flex; align-items: center; height: 17px; padding-left: 3px; }
.file-tabs a { padding: 3px 5px; }
.file-tabs a.active { display: flex; gap: 6px; align-items: center; height: 17px; padding: 0 7px 0 10px; background: #3b4453; color: #fff; font-weight: bold; clip-path: polygon(6px 0, 100% 0, calc(100% - 6px) 100%, 0 100%); }
.gap { margin-left: 6px; }
.add { margin: 0 7px; }

.canvas { flex: 1; position: relative; border: solid #343d4a; border-width: 2px 0; background-color: #212830; background-image: linear-gradient(#242b34 1px, transparent 1px), linear-gradient(90deg, #242b34 1px, transparent 1px); background-size: 217px 216px; background-position: 19px 80px; }
.viewport-label { position: absolute; left: 0; top: 3px; }
.viewport-buttons { position: absolute; right: 7px; top: 5px; display: flex; gap: 5px; }
.plan { position: absolute; left: 440px; top: 35px; }
.plan text { fill: #a9adb2; }
.crosshair { position: absolute; left: 806px; top: 113px; }
.crosshair text { fill: #fff; font-size: 10px; font-weight: bold; }
.dynamic-prompt { position: absolute; left: 839px; top: 148px; padding: 2px 3px; border: 1px solid #b5b5b5; background: #999; color: #111; white-space: nowrap; }
.dynamic-menu { position: absolute; left: 839px; top: 175px; width: 55px; height: 109px; display: flex; flex-direction: column; border: 1px solid #aaa; }
.dynamic-menu button { flex: 1; padding-left: 15px; background: #fff; color: #858585; }
.dynamic-menu button + button { border-top: 1px solid #aaa; }
.dynamic-menu .selected::before { content: ""; width: 5px; height: 5px; margin: 0 6px 0 -11px; border-radius: 50%; background: #000; }

.viewcube { position: absolute; right: 9px; top: 21px; display: flex; flex-direction: column; align-items: center; }
.compass { fill: #bcbec2; font: bold 11px "Liberation Sans", sans-serif; text-anchor: middle; }
.face { fill: #3c434f; font-weight: bold; font-size: 7px; text-anchor: middle; }
.wcs { width: 30px; height: 11px; margin-top: 8px; padding-left: 3px; gap: 3px; border: 1px solid #a3a5b2; border-radius: 3px; background: #8b8d9e; color: #c9cbd4; }
.wcs .caret { border-top-color: #a9abba; }
.navbar { position: absolute; right: 3px; top: 136px; width: 21px; height: 136px; display: flex; flex-direction: column; align-items: center; justify-content: space-between; padding: 2px 0; border-radius: 2px; background: #5b6065; }
.navbar svg { fill: none; stroke: #3f454b; }
.navbar .caret { border-top-color: #32383e; }
.dot { align-self: flex-end; width: 4px; height: 4px; margin-right: 2px; border: 1px solid #3f454b; border-radius: 50%; }

.ucs { position: absolute; left: 0; bottom: 5px; }
.ucs text { fill: #c3c5c7; font: 12px "Liberation Sans", sans-serif; }

.command { position: absolute; left: 199px; right: 204px; bottom: 1px; font: 8px/11px "DejaVu Sans Mono", monospace; }
.history { display: flex; flex-direction: column; align-items: flex-start; gap: 2px; padding: 0 0 3px 40px; }
.history p { margin: 0; padding: 0 1px; border-radius: 1px; background: #555859; color: #dcdcdc; white-space: pre; }
.history .old { background: #46494b; color: #a5a7a9; }
.command-bar { display: flex; align-items: center; gap: 6px; height: 16px; padding-left: 2px; background: #2f3746; }
.grip { width: 4px; height: 12px; border: dotted #c9ccd1; border-width: 0 1px; }
.prompt { flex: 1; min-width: 0; display: flex; align-items: center; align-self: stretch; gap: 3px; margin-left: -3px; padding: 0 3px; background: #fff; color: #222; }
.prompt .caret { border-top-color: #444; }
.prompt .caret.up { border: 2px solid transparent; border-bottom: 3px solid #444; border-top: 0; }
.prompt label { white-space: nowrap; }
.prompt button { display: inline; border-radius: 2px; background: #d3d3d3; }
.prompt u { color: #1f1fe0; text-decoration: none; }
.prompt input { flex: 1; min-width: 0; padding: 0; border: 0; background: none; font: inherit; }

.statusbar { flex: none; display: flex; justify-content: space-between; height: 17px; }
.layout-tabs, .status-tools { display: flex; align-items: center; }
.layout-tabs { padding-left: 3px; }
.layout-tabs a { padding: 3px 4px; }
.layout-tabs a.active { height: 17px; padding: 3px 11px; background: #3b4453; color: #fff; font-weight: bold; clip-path: polygon(5px 0, 100% 0, calc(100% - 6px) 100%, 0 100%); }
.status-tools { padding: 0 4px 0 2px; background: #2f3743; }
.status-tools button { width: 15px; height: 15px; justify-content: center; }
.status-tools .drop { width: 13px; }
.status-tools .caret { border-width: 3px 3px 0; }
.status-tools .on { background: #4f83bb; color: #fff; }
.status-tools .text { width: 32px; }
.status-tools .scale { width: 28px; gap: 2px; }
.status-tools .isolate { width: 19px; }
```
